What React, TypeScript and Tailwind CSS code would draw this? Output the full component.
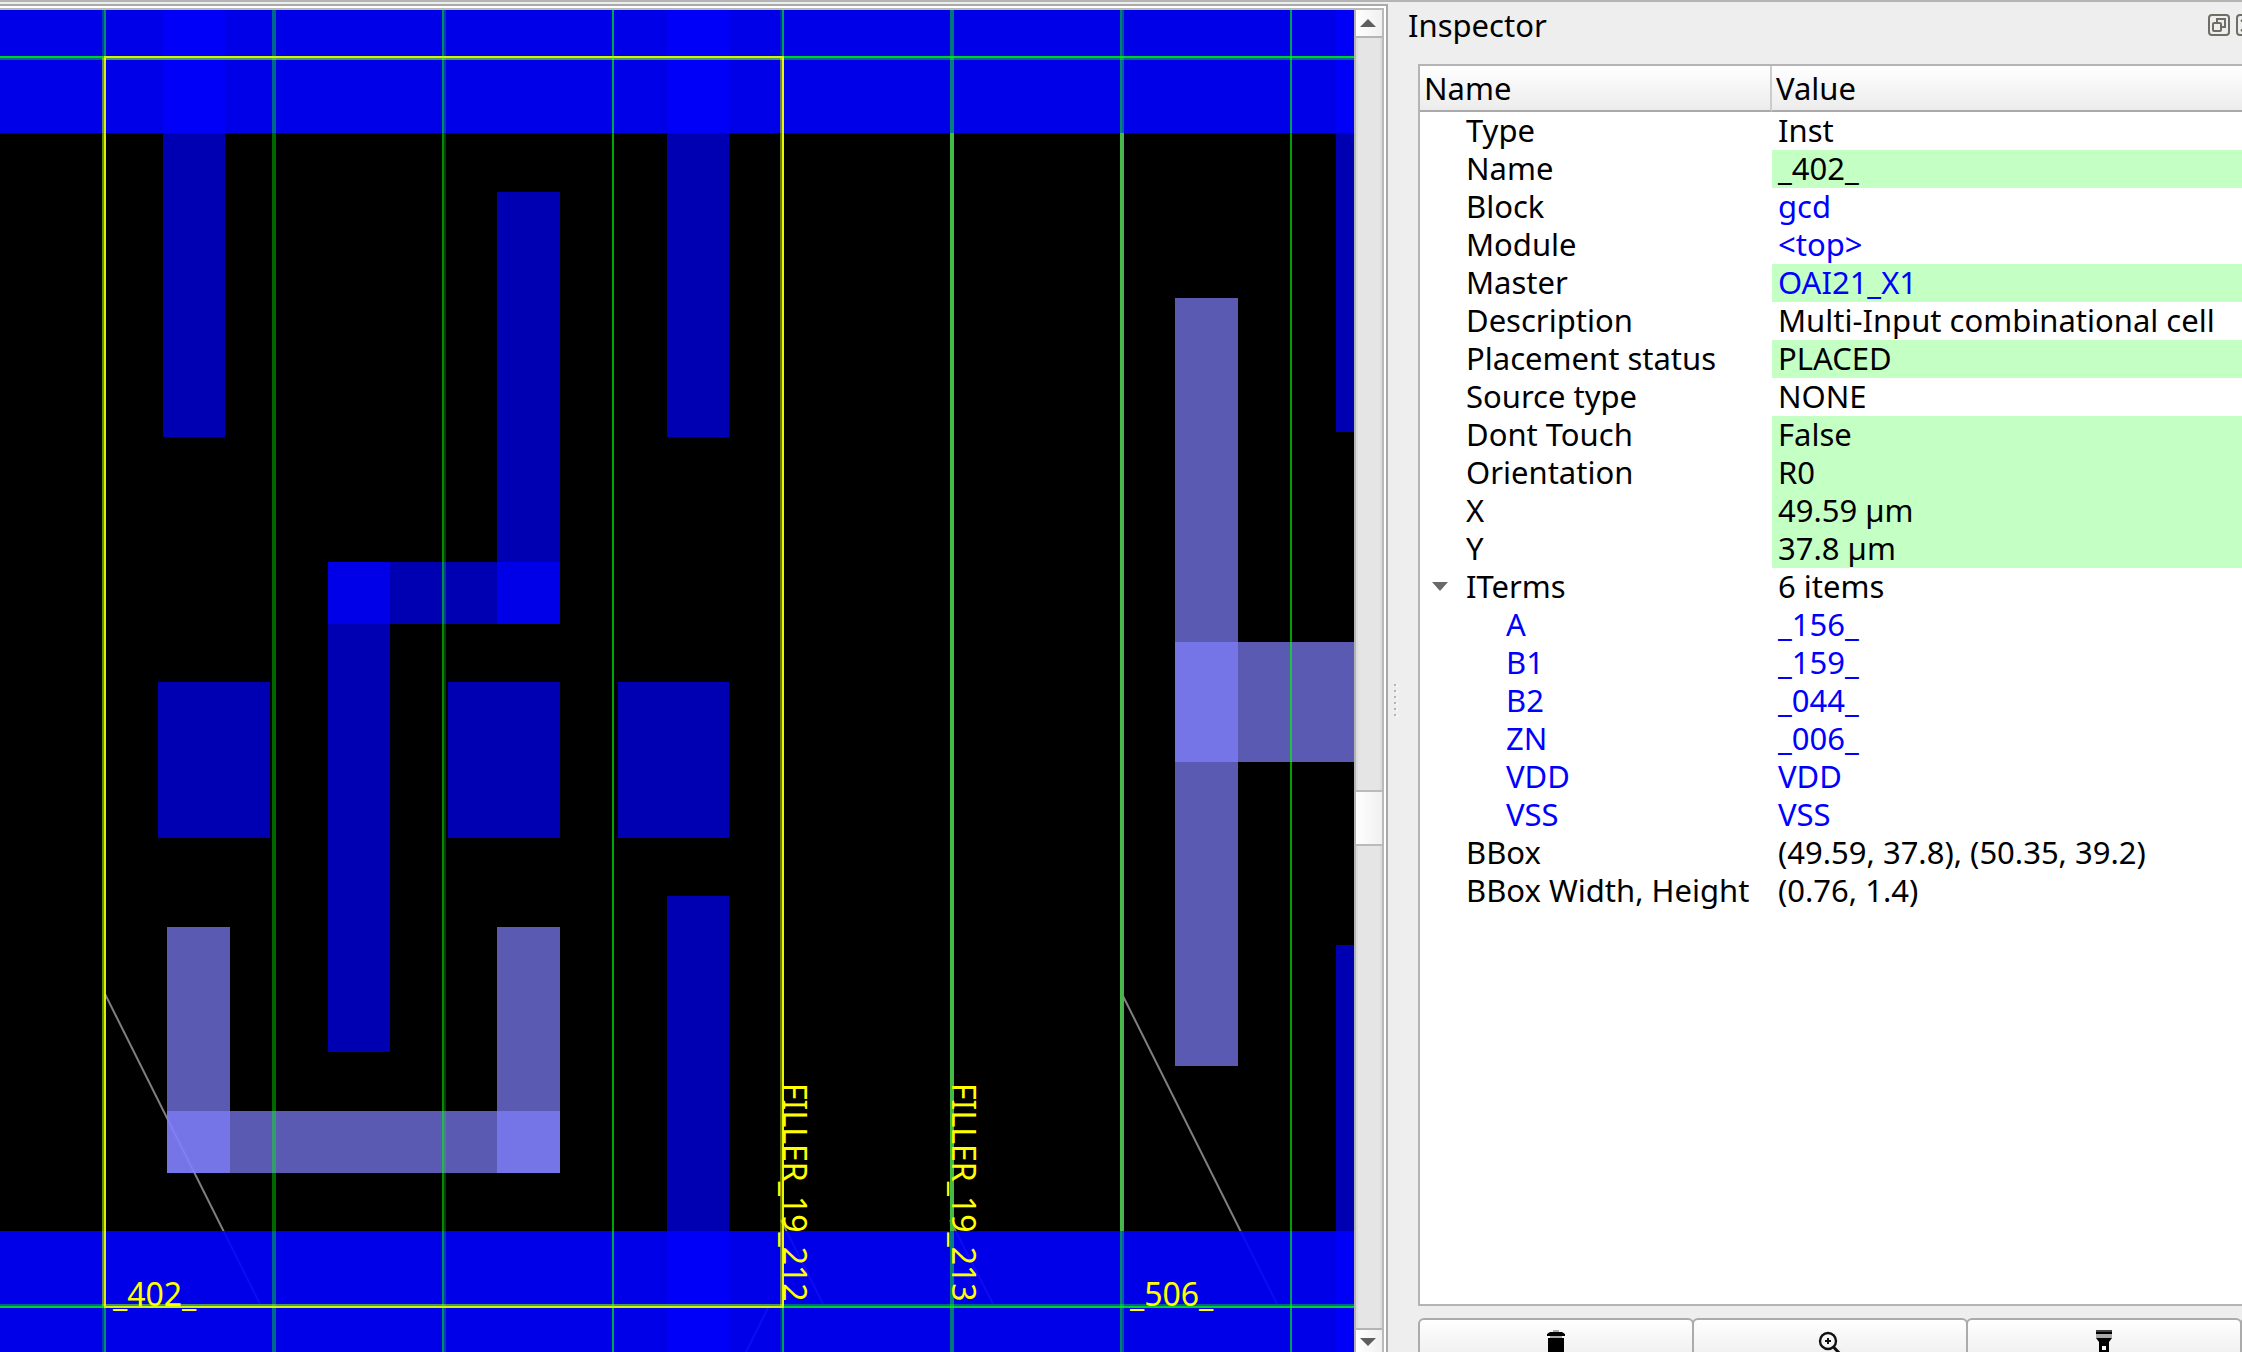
import React from "react";

const FONT = '"Noto Sans", sans-serif';

type Box = [x: number, y: number, w: number, h: number];

const METAL: Box[] = [
  [163, 0, 62, 427],
  [497, 182, 63, 432],
  [328, 552, 232, 62],
  [328, 552, 62, 490],
  [667, 0, 62, 427],
  [158, 672, 112, 156],
  [448, 672, 112, 156],
  [618, 672, 111, 156],
  [667, 886, 62, 800],
  [1336, 0, 200, 422],
  [1336, 935, 200, 800],
];

const PINS: Box[] = [
  [167, 917, 63, 246],
  [497, 917, 63, 246],
  [167, 1101, 393, 62],
  [1175, 288, 63, 768],
  [1175, 632, 300, 120],
];

const RAILS: Box[] = [
  [0, 0, 2000, 123],
  [0, 0, 2000, 123],
  [0, 1221, 2000, 600],
  [0, 1221, 2000, 600],
];

const TRACKS: { x: number; w: number; o: number }[] = [
  { x: 102, w: 2, o: 0.25 },
  { x: 104, w: 2, o: 0.55 },
  { x: 272, w: 4, o: 0.4 },
  { x: 442, w: 2, o: 0.55 },
  { x: 444, w: 2, o: 0.25 },
  { x: 612, w: 2, o: 0.65 },
  { x: 780, w: 2, o: 0.15 },
  { x: 782, w: 2, o: 0.62 },
  { x: 950, w: 4, o: 0.47 },
  { x: 1120, w: 2, o: 0.5 },
  { x: 1122, w: 2, o: 0.35 },
  { x: 1290, w: 2, o: 0.62 },
];

const DIAGONALS: [number, number, number, number][] = [
  [105, 984, 260, 1294],
  [1122, 984, 1277, 1294],
  [781, 1210, 823, 1294],
  [950, 1210, 993, 1294],
  [768, 1298, 735, 1364],
];

function Boxes({ items, fill }: { items: Box[]; fill: string }) {
  return (
    <g fill={fill} fillOpacity={0.7}>
      {items.map(([x, y, w, h], i) => (
        <rect key={i} x={x} y={y} width={w} height={h} />
      ))}
    </g>
  );
}

function LayoutCanvas() {
  return (
    <svg className="block h-full w-full bg-black" role="img" aria-label="Layout view">
      <g stroke="#fff" strokeOpacity={0.5} strokeWidth={2}>
        {DIAGONALS.map(([x1, y1, x2, y2], i) => (
          <line key={i} x1={x1} y1={y1} x2={x2} y2={y2} />
        ))}
      </g>
      <g fill="#808080">
        <rect x={950} y={47} width={4} height={1250} />
        <rect x={1120} y={47} width={4} height={1250} />
      </g>
      <Boxes items={METAL} fill="#0000ff" />
      <Boxes items={PINS} fill="#8080ff" />
      <Boxes items={RAILS} fill="#0000ff" />
      <g fill="#00ff00">
        {TRACKS.map((t) => (
          <rect key={t.x} x={t.x} y={0} width={t.w} height="100%" fillOpacity={t.o} />
        ))}
        <rect x={0} y={46} width="100%" height={2} fillOpacity={0.82} />
        <rect x={0} y={48} width="100%" height={2} fillOpacity={0.4} />
        <rect x={0} y={1294} width="100%" height={2} fillOpacity={0.4} />
        <rect x={0} y={1296} width="100%" height={2} fillOpacity={0.82} />
      </g>
      <g fill="#ffff00">
        <rect x={104} y={46} width={680} height={2} fillOpacity={0.8} />
        <rect x={104} y={48} width={680} height={2} fillOpacity={0.3} />
        <rect x={104} y={1294} width={680} height={2} fillOpacity={0.3} />
        <rect x={104} y={1296} width={680} height={2} fillOpacity={0.8} />
        <rect x={102} y={48} width={2} height={1248} fillOpacity={0.4} />
        <rect x={104} y={48} width={2} height={1248} fillOpacity={0.85} />
        <rect x={780} y={48} width={2} height={1248} fillOpacity={0.4} />
        <rect x={782} y={48} width={2} height={1248} fillOpacity={0.9} />
      </g>
      <g fill="#ffff00" fontFamily={FONT} fontSize={32}>
        <text x={113} y={1296}>_402_</text>
        <text x={1130} y={1296}>_506_</text>
        <text transform="translate(783 1073) rotate(90)">FILLER_19_212</text>
        <text transform="translate(952 1073) rotate(90)">FILLER_19_213</text>
      </g>
    </svg>
  );
}

function Arrow({ up = false }: { up?: boolean }) {
  return (
    <svg width="16" height="8" viewBox="0 0 16 8" aria-hidden="true">
      <path d={up ? "M8 0 16 8H0Z" : "M0 0H16L8 8Z"} fill="#5e5e5e" />
    </svg>
  );
}

function ScrollBar() {
  return (
    <div className="flex w-7 shrink-0 flex-col border-l-2 border-[#b4b4b4] bg-[#e5e5e5]">
      <button
        aria-label="Scroll up"
        className="flex h-7 shrink-0 items-center justify-center border-b-2 border-[#b4b4b4] bg-linear-to-r from-white to-[#f0f0f0] pr-[2px]"
      >
        <Arrow up />
      </button>
      <div className="grow-[752] border-x-2 border-[#dcdcdc]" />
      <button
        aria-label="Scroll position"
        className="h-14 shrink-0 border-y-2 border-[#bbbbbb] bg-linear-to-r from-white to-[#f0f0f0]"
      />
      <div className="grow-[482] border-x-2 border-[#dcdcdc]" />
      <button
        aria-label="Scroll down"
        className="flex h-6 shrink-0 items-center justify-center border-t-2 border-[#b4b4b4] bg-linear-to-r from-white to-[#f0f0f0] pt-[2px] pr-[2px]"
      >
        <Arrow />
      </button>
    </div>
  );
}

type Row = {
  name: string;
  value: string;
  editable?: boolean;
  link?: boolean;
  child?: boolean;
  group?: boolean;
};

const ROWS: Row[] = [
  { name: "Type", value: "Inst" },
  { name: "Name", value: "_402_", editable: true },
  { name: "Block", value: "gcd", link: true },
  { name: "Module", value: "<top>", link: true },
  { name: "Master", value: "OAI21_X1", link: true, editable: true },
  { name: "Description", value: "Multi-Input combinational cell" },
  { name: "Placement status", value: "PLACED", editable: true },
  { name: "Source type", value: "NONE" },
  { name: "Dont Touch", value: "False", editable: true },
  { name: "Orientation", value: "R0", editable: true },
  { name: "X", value: "49.59 µm", editable: true },
  { name: "Y", value: "37.8 µm", editable: true },
  { name: "ITerms", value: "6 items", group: true },
  { name: "A", value: "_156_", link: true, child: true },
  { name: "B1", value: "_159_", link: true, child: true },
  { name: "B2", value: "_044_", link: true, child: true },
  { name: "ZN", value: "_006_", link: true, child: true },
  { name: "VDD", value: "VDD", link: true, child: true },
  { name: "VSS", value: "VSS", link: true, child: true },
  { name: "BBox", value: "(49.59, 37.8), (50.35, 39.2)" },
  { name: "BBox Width, Height", value: "(0.76, 1.4)" },
];

function PropertyRow({ row }: { row: Row }) {
  return (
    <tr className="h-[38px] leading-9">
      <td className="p-0 pb-[2px]">
        <div className="flex items-center">
          {row.group ? (
            <button aria-label="Collapse ITerms" className="flex w-[46px] shrink-0 pl-3">
              <svg width="16" height="9" viewBox="0 0 16 9" aria-hidden="true">
                <path d="M0 0H16L8 9Z" fill="#6a6a6a" />
              </svg>
            </button>
          ) : (
            <span className={row.child ? "w-[86px] shrink-0" : "w-[46px] shrink-0"} />
          )}
          {row.child ? (
            <a href="#" className="text-[#0000ff]">{row.name}</a>
          ) : (
            <span>{row.name}</span>
          )}
        </div>
      </td>
      <td className={row.editable ? "bg-[#c4ffc4] pt-0 pb-[2px] pl-[6px]" : "pt-0 pb-[2px] pl-[6px]"}>
        {row.link ? (
          <a href="#" className="text-[#0000ff]">{row.value}</a>
        ) : (
          row.value
        )}
      </td>
    </tr>
  );
}

function FloatIcon() {
  return (
    <svg width="22" height="22" viewBox="0 0 22 22" fill="none" stroke="#6e6e66" strokeWidth="2" aria-hidden="true">
      <rect x="1" y="1" width="20" height="20" rx="3" />
      <rect x="5" y="9" width="8" height="8" rx="1" />
      <path d="M9 8V5H17V13H14" />
    </svg>
  );
}

function CloseIcon() {
  return (
    <svg width="22" height="22" viewBox="0 0 22 22" fill="none" stroke="#6e6e66" strokeWidth="2" aria-hidden="true">
      <rect x="1" y="1" width="20" height="20" rx="3" />
      <path d="M5 6 16 17M16 6 5 17" />
    </svg>
  );
}

function TrashIcon() {
  return (
    <svg width="20" height="24" viewBox="0 0 20 24" aria-hidden="true">
      <path d="M7 0H13V2H7Z" fill="#aaa" />
      <path d="M4 2H16L19 4V6H1V4Z" fill="#000" />
      <path d="M4 6H16V8H4Z" fill="#aaa" />
      <path d="M2 8H18V26H2Z" fill="#000" />
    </svg>
  );
}

function ZoomIcon() {
  return (
    <svg width="24" height="24" viewBox="0 0 24 24" fill="none" stroke="#111" aria-hidden="true">
      <circle cx="10" cy="11" r="8" strokeWidth="2.4" />
      <path d="M10 8V14M7 11H13" strokeWidth="2" />
      <path d="M15.500 17 23 25" strokeWidth="3" />
    </svg>
  );
}

function FlashlightIcon() {
  return (
    <svg width="16" height="24" viewBox="0 0 16 24" aria-hidden="true">
      <path d="M0 0H16V2H0Z" fill="#444" />
      <path d="M0 2H16V4H0ZM0 8H16L13 12V24H3V12Z" fill="#000" />
      <path d="M0 4H16V8H0Z" fill="#aaa" />
      <rect x="6" y="16" width="4" height="4" fill="#fff" />
    </svg>
  );
}

function Action({ label, children }: { label: string; children?: React.ReactNode }) {
  return (
    <button
      aria-label={label}
      className="-mr-[2px] flex h-14 w-[276px] shrink-0 justify-center rounded-md border-2 border-[#ababab] bg-linear-to-b from-white to-[#e8e8e8] pt-[10px]"
    >
      {children}
    </button>
  );
}

export default function App() {
  return (
    <div
      className="flex h-screen flex-col overflow-hidden border-t-2 border-[#b4b4b4] bg-[#eeeeee] pt-[2px] text-[31px] leading-[38px] text-black"
      style={{ fontFamily: FONT }}
    >
      <div className="flex min-h-0 flex-1">
        <main className="flex min-w-0 flex-1 border-t-2 border-r-2 border-[#a9a9a9]">
          <div className="flex min-w-0 flex-1 border-t-2 border-r-2 border-white">
            <div className="flex min-w-0 flex-1 border-t-2 border-r-2 border-[#b9b9b9]">
              <div className="min-w-0 flex-1">
                <LayoutCanvas />
              </div>
              <ScrollBar />
            </div>
          </div>
        </main>
        <aside className="flex w-[854px] shrink-0 overflow-hidden">
          <div className="flex w-[30px] shrink-0 flex-col justify-center gap-1 pt-11 pl-[6px]">
            {[0, 1, 2, 3, 4, 5].map((i) => (
              <span key={i} className="size-[2px] bg-[#b4b4b4] shadow-[2px_1px_0_#f8f8f8]" />
            ))}
          </div>
          <div className="-ml-[10px] flex min-w-0 flex-1 flex-col">
            <header className="flex h-[60px] shrink-0 items-start">
              <h1 className="flex-1 pt-[2px]">Inspector</h1>
              <div className="-mr-4 flex gap-[6px] pt-[10px]">
                <button aria-label="Float panel"><FloatIcon /></button>
                <button aria-label="Close panel"><CloseIcon /></button>
              </div>
            </header>
            <div className="ml-[10px] flex min-h-0 flex-1 flex-col">
              <div className="min-h-0 flex-1 border-y-2 border-l-2 border-[#b4b4b4] bg-white">
                <table className="w-full table-fixed border-separate border-spacing-0 whitespace-nowrap">
                  <colgroup>
                    <col className="w-[352px]" />
                    <col />
                  </colgroup>
                  <thead>
                    <tr className="h-[46px] bg-linear-to-b from-white to-[#ebebeb] text-left">
                      <th className="border-r-2 border-b-2 border-r-[#cccccc] border-b-[#a9a9a9] py-0 pl-1 font-normal">Name</th>
                      <th className="border-b-2 border-[#a9a9a9] py-0 pl-1 font-normal">Value</th>
                    </tr>
                  </thead>
                  <tbody>
                    {ROWS.map((row) => (
                      <PropertyRow key={row.name} row={row} />
                    ))}
                  </tbody>
                </table>
              </div>
              <div className="flex h-[46px] shrink-0 items-start pt-3">
                <Action label="Delete"><TrashIcon /></Action>
                <Action label="Zoom to"><ZoomIcon /></Action>
                <Action label="Highlight"><FlashlightIcon /></Action>
                <Action label="More" />
              </div>
            </div>
          </div>
        </aside>
      </div>
    </div>
  );
}
